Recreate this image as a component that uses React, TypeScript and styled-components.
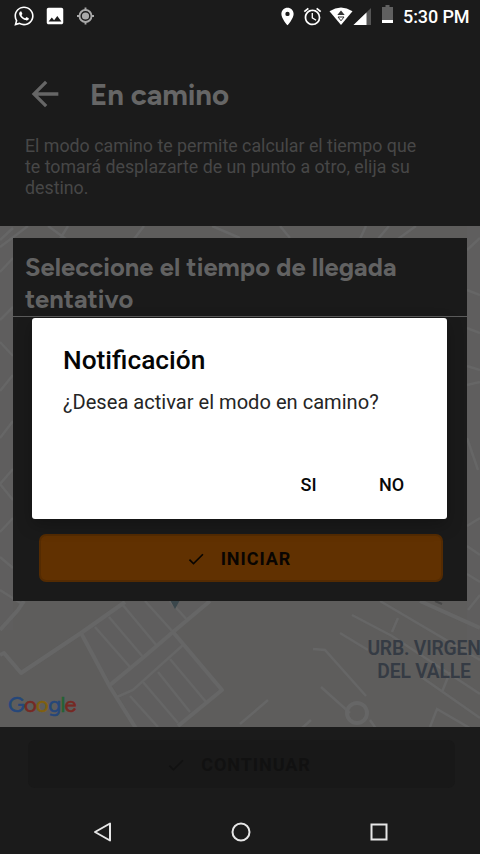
import React from "react";
import styled, { createGlobalStyle } from "styled-components";
import { MdAlarm, MdArrowBack, MdCheck, MdImage, MdLocationOn } from "react-icons/md";
import { FaWhatsapp } from "react-icons/fa";

const GlobalStyle = createGlobalStyle`
  * { box-sizing: border-box; }
  body { margin: 0; background: #1b1b1b; }
  h1, h2, p { margin: 0; }
  button { font: inherit; border: 0; padding: 0; background: none; color: inherit; }
  svg { display: block; flex: none; }
`;

const Screen = styled.div`
  position: relative;
  display: flex;
  flex-direction: column;
  width: 480px;
  height: 854px;
  overflow: hidden;
  background: #1b1b1b;
  font-family: Roboto, "Liberation Sans", sans-serif;
`;

const StatusBar = styled.div`
  display: flex;
  justify-content: space-between;
  height: 32px;
  padding: 0 11px 0 13px;
  color: #fff;
`;

const StatusGroup = styled.div`
  display: flex;
  align-items: center;
`;

const StatusIcon = styled.span<{ $left?: number; $dim?: boolean }>`
  display: flex;
  margin-left: ${(p) => p.$left ?? 0}px;
  color: ${(p) => (p.$dim ? "#a9a9a9" : "#fff")};
`;

const Clock = styled.span`
  width: 66px;
  margin-left: 10px;
  padding-top: 2px;
  font-size: 18px;
  font-weight: 500;
  line-height: 32px;
  letter-spacing: -0.1px;
  white-space: nowrap;
`;

const Header = styled.header`
  height: 194px;
  padding: 41px 25px 0;
`;

const TitleRow = styled.div`
  display: flex;
  align-items: center;
  height: 42px;
  gap: 24px;
  color: #666;
`;

const BackButton = styled.button`
  display: flex;
  width: 41px;
`;

const Title = styled.h1`
  padding-top: 2px;
  font-family: Figtree, Lato, sans-serif;
  font-size: 29.4px;
  font-weight: 700;
  line-height: 42px;
  letter-spacing: -0.1px;
  white-space: nowrap;
`;

const Description = styled.p`
  margin-top: 20px;
  color: #474747;
  font-size: 17.8px;
  line-height: 21px;
  white-space: pre-line;
`;

const MapArea = styled.main`
  position: relative;
  height: 501px;
  padding: 12px 13px;
  background: #5e5d5c;
`;

const MapDrawing = styled.svg`
  position: absolute;
  inset: 0;
`;

const MapLabel = styled.div`
  position: absolute;
  left: 364px;
  top: 411px;
  width: 120px;
  color: #353b44;
  font-size: 19.3px;
  font-weight: 600;
  line-height: 23px;
  letter-spacing: -0.2px;
  text-align: center;
  white-space: pre;
`;

const GoogleMark = styled.div`
  position: absolute;
  left: 8px;
  top: 465px;
  font-family: Figtree, Lato, sans-serif;
  font-size: 22px;
  line-height: 28px;
  letter-spacing: -0.7px;
  -webkit-text-stroke: 0.6px currentColor;
`;

const Letter = styled.span<{ $color: string }>`
  color: ${(p) => p.$color};
`;

const Panel = styled.section`
  position: relative;
  display: flex;
  flex-direction: column;
  justify-content: space-between;
  height: 363px;
  padding-bottom: 19px;
  background: #1a1a1a;
`;

const PanelTitle = styled.h2`
  height: 79px;
  padding: 13px 12px 0;
  border-bottom: 1px solid #5b5b5b;
  color: #626262;
  font-family: Figtree, Lato, sans-serif;
  font-size: 25.5px;
  font-weight: 700;
  line-height: 32px;
  letter-spacing: 0.06px;
  white-space: pre-line;
`;

const ActionButton = styled.button<{ $muted?: boolean }>`
  display: flex;
  align-items: center;
  justify-content: center;
  gap: 15px;
  height: 48px;
  margin: ${(p) => (p.$muted ? "0 25px 0 28px" : "0 24px 0 26px")};
  padding: ${(p) => (p.$muted ? "1px 6px 0 0" : "1px 5px 0 0")};
  border-radius: 7px;
  border: ${(p) => (p.$muted ? "0" : "2px solid #542b02")};
  background: ${(p) => (p.$muted ? "#181818" : "#613101")};
  color: ${(p) => (p.$muted ? "#111" : "#090502")};
  font-size: 18px;
  font-weight: 700;
  letter-spacing: 0.95px;
`;

const Footer = styled.footer`
  height: 83px;
  padding-top: 13px;
`;

const NavBar = styled.nav`
  display: grid;
  grid-template-columns: repeat(3, 138px);
  place-items: center;
  height: 44px;
  padding-left: 34px;
`;

const Dialog = styled.div`
  position: absolute;
  left: 32px;
  top: 318px;
  width: 415px;
  height: 201px;
  display: flex;
  flex-direction: column;
  padding: 26px 14px 17px 31px;
  border-radius: 3px;
  background: #fff;
  box-shadow: 0 6px 16px rgba(0, 0, 0, 0.25);
`;

const DialogTitle = styled.h2`
  color: #050505;
  font-size: 26.3px;
  font-weight: 500;
  line-height: 32px;
`;

const DialogText = styled.p`
  margin-top: 12px;
  color: #252525;
  font-size: 20.1px;
  line-height: 28px;
  white-space: nowrap;
`;

const DialogActions = styled.div`
  display: flex;
  justify-content: flex-end;
  margin-top: auto;
`;

const DialogButton = styled.button`
  width: 83px;
  height: 36px;
  color: #080808;
  font-size: 18px;
  font-weight: 500;
`;

const minorRoads = [
  "M117 697L133 690L183 645",
  "M95 627L130 667M109 617L143 657M122 604L157 646M145 601L173 632M170 601L188 621",
  "M130 696L158 727M143 682L178 723M158 672L190 712M170 659L206 702",
  "M352 615L392 636L480 694M380 601L480 660M398 618L392 632M340 633L368 650",
  "M313 649L325 650L366 696M321 687L350 713M370 720L377 730",
  "M240 724L268 700M302 728L311 720M420 676L480 718M430 727L437 709L480 734M442 692L450 672",
  "M0 247L28 226M48 226L66 239M60 239L68 226M134 239L144 226M212 226L240 238M280 226L290 238M360 239L366 226M378 239L389 226M398 239L416 226",
  "M0 240L13 228M0 272L13 258M13 307L0 320M0 342L13 356M0 391L13 375M0 438L13 421M13 469L0 484L13 500M0 532L13 518M0 557L13 568M0 590L22 604",
  "M467 250L480 238M467 290L480 295M467 328L480 333M467 366L480 370M467 385L480 382M467 438L478 470M467 526L480 518M467 546L480 555M467 574L480 582M468 610L480 595",
];

const mainRoads = [
  "M0 655L4 653L21 673L81 633L125 602",
  "M81 633L110 687L137 730",
  "M110 685L145 656L173 632L210 601",
  "M173 632L222 690L178 726",
  "M24 601L18 610L0 630",
  "M420 601L480 628",
];

const googleLetters: [string, string][] = [
  ["G", "#25477a"],
  ["o", "#762923"],
  ["o", "#80600f"],
  ["g", "#25477a"],
  ["l", "#246333"],
  ["e", "#762923"],
];

export default function App() {
  return (
    <Screen>
      <GlobalStyle />
      <StatusBar>
        <StatusGroup>
          <StatusIcon><FaWhatsapp size={22} /></StatusIcon>
          <StatusIcon $left={9}><MdImage size={22} /></StatusIcon>
          <StatusIcon $left={10} $dim>
            <svg width="19" height="19" viewBox="0 0 19 19" fill="none" stroke="currentColor" strokeWidth="1.9">
              <circle cx="9.5" cy="9" r="6" />
              <circle cx="9.5" cy="9" r="3.6" fill="currentColor" stroke="none" />
              <path d="M9.5 0.5V3M9.5 15V17.5M1 9H3.5M15.5 9H18" />
            </svg>
          </StatusIcon>
        </StatusGroup>
        <StatusGroup>
          <StatusIcon><MdLocationOn size={21} /></StatusIcon>
          <StatusIcon $left={4}><MdAlarm size={21} /></StatusIcon>
          <StatusIcon $left={6}>
            <svg width="24" height="18" viewBox="0 0 24 18">
              <path d="M0.5 4.2Q12-3.2 23.5 4.2L12 18Z" fill="#fff" />
              <path d="M8.3 8L12 3.4L15.7 8Z" fill="#333" />
              <path d="M9 10H15L12 13.8Z" fill="#fff" stroke="#333" strokeWidth="1" />
            </svg>
          </StatusIcon>
          <StatusIcon $left={0}>
            <svg width="19" height="17" viewBox="0 0 19 17">
              <path d="M0.5 17L18 0V17Z" fill="#555" />
              <path d="M0.5 17L13.5 4.4V17Z" fill="#fff" />
            </svg>
          </StatusIcon>
          <StatusIcon $left={10}>
            <svg width="11" height="22" viewBox="0 0 11 22">
              <path d="M3.5 0H7.5V2H11V15H0V2H3.5Z" fill="#606060" />
              <path d="M0 15H11V18H0Z" fill="#fff" />
            </svg>
          </StatusIcon>
          <Clock>5:30 PM</Clock>
        </StatusGroup>
      </StatusBar>

      <Header>
        <TitleRow>
          <BackButton aria-label="Atrás"><MdArrowBack size={40} /></BackButton>
          <Title>En camino</Title>
        </TitleRow>
        <Description>
          {"El modo camino te permite calcular el tiempo que\nte tomará desplazarte de un punto a otro, elija su\ndestino."}
        </Description>
      </Header>

      <MapArea>
        <MapDrawing width="480" height="501" viewBox="0 226 480 501" fill="none">
          <path d="M81 633L125 602H208L173 632L222 690L178 727H137Z" fill="#606060" fillOpacity=".5" />
          <path d="M0 226H13V630H0ZM467 226H480V660H467Z" fill="#606060" fillOpacity=".5" />
          {minorRoads.map((d) => <path key={d} d={d} stroke="#666" strokeWidth="2.5" />)}
          {mainRoads.map((d) => <path key={d} d={d} stroke="#666" strokeWidth="4" strokeLinejoin="round" />)}
          <circle cx="357" cy="713" r="10" stroke="#666" strokeWidth="4" />
          <path d="M170 600H180L175 609Z" fill="#3b474c" />
          <path d="M435 601L442 604" stroke="#484848" strokeWidth="2" />
        </MapDrawing>
        <MapLabel>{"URB. VIRGEN\nDEL VALLE"}</MapLabel>
        <GoogleMark>
          {googleLetters.map(([char, color], i) => <Letter key={i} $color={color}>{char}</Letter>)}
        </GoogleMark>
        <Panel>
          <PanelTitle>{"Seleccione el tiempo de llegada\ntentativo"}</PanelTitle>
          <ActionButton><MdCheck size={20} />INICIAR</ActionButton>
        </Panel>
      </MapArea>

      <Footer>
        <ActionButton as="div" $muted><MdCheck size={20} />CONTINUAR</ActionButton>
      </Footer>

      <NavBar>
        <svg width="20" height="22" viewBox="0 0 20 22" fill="none" stroke="#e6e6e6" strokeWidth="2" strokeLinejoin="round">
          <path d="M2 11L17 2.5V19.5Z" />
        </svg>
        <svg width="20" height="20" viewBox="0 0 20 20" fill="none" stroke="#e6e6e6" strokeWidth="2">
          <circle cx="10" cy="10" r="8.5" />
        </svg>
        <svg width="18" height="18" viewBox="0 0 18 18" fill="none" stroke="#e6e6e6" strokeWidth="2">
          <rect x="1.5" y="1.5" width="15" height="15" />
        </svg>
      </NavBar>

      <Dialog role="dialog" aria-label="Notificación">
        <DialogTitle>Notificación</DialogTitle>
        <DialogText>¿Desea activar el modo en camino?</DialogText>
        <DialogActions>
          <DialogButton>SI</DialogButton>
          <DialogButton>NO</DialogButton>
        </DialogActions>
      </Dialog>
    </Screen>
  );
}
